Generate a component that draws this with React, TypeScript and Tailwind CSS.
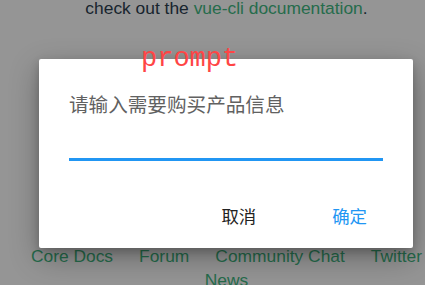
import React from "react";

export default function App() {
  const links = ["Core Docs", "Forum", "Community Chat", "Twitter", "News"];
  return (
    <div className="relative w-[425px] h-[285px] overflow-hidden bg-white" style={{ fontFamily: '"Liberation Sans", Arial, sans-serif' }}>
      <div className="w-[453px] text-center text-[#2c3e50] text-[17.4px]">
        <p className="leading-[20px] -mt-[2px]">
          check out the <a className="text-[#42b983]">vue-cli documentation</a>.
        </p>
        <div className="h-[226px]" />
        <ul className="leading-[24px]">
          {links.map((l) => (
            <li key={l} className="inline-block mx-[13px]">
              <a className="text-[#42b983]">{l}</a>
            </li>
          ))}
        </ul>
      </div>

      <div className="absolute inset-0 bg-black/[0.415]" />

      <div
        className="absolute left-[39px] top-[59px] w-[374px] h-[189px] bg-white rounded-[2px] shadow-[0_10px_30px_rgba(0,0,0,0.3),0_4px_10px_rgba(0,0,0,0.2)] flex flex-col px-[30px]"
        style={{ fontFamily: '"Noto Sans CJK SC", "Liberation Sans", sans-serif' }}
      >
        <div className="pt-[34px] text-[19.6px] leading-[22px] text-[#616161]">请输入需要购买产品信息</div>
        <div className="h-[46px] border-b-[3px] border-[#2196f3]" />
        <div className="mt-[45px] flex justify-end gap-[76px] mr-[16px] text-[17.4px] leading-[20px]">
          <span className="text-[#222222]">取消</span>
          <span className="text-[#2196f3]">确定</span>
        </div>
      </div>

      <div
        className="absolute left-[141px] top-[44px] text-[27px] leading-[30px] text-[#ff4545]"
        style={{ fontFamily: '"Liberation Mono", "Courier New", monospace' }}
      >
        prompt
      </div>
    </div>
  );
}
